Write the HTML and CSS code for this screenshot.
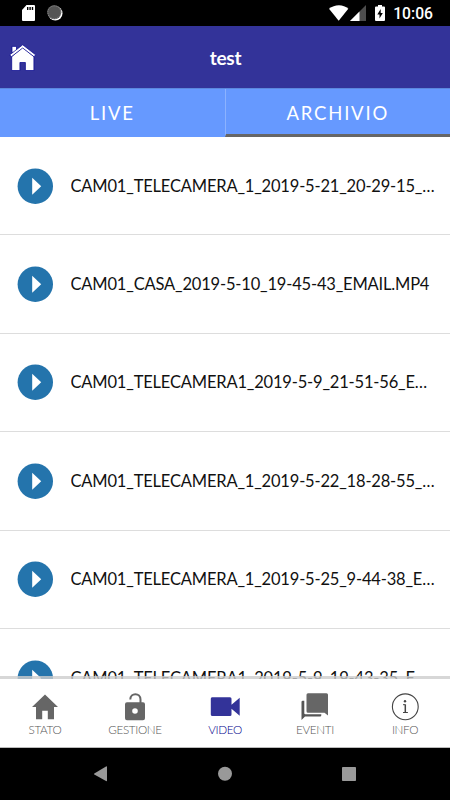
FILE: index.html
```html
<!DOCTYPE html>
<html lang="it">
<head>
  <meta charset="utf-8">
  <meta name="viewport" content="width=device-width, initial-scale=1">
  <title>test</title>
  <link rel="stylesheet" href="styles.css">
</head>
<body>
  <div class="status-bar">
    <svg class="sd" width="13" height="16" viewBox="0 0 13 16"><path fill="#fff" d="M4.5 0H12a1 1 0 0 1 1 1v14a1 1 0 0 1-1 1H1a1 1 0 0 1-1-1V5z"/><path stroke="#000" stroke-width="1.4" d="M5.7 2v3M8.1 2v3M10.5 2v3"/></svg>
    <svg class="sync" width="16" height="16" viewBox="0 0 16 16"><circle cx="8.3" cy="8.3" r="7.2" fill="#fff"/><circle cx="7.3" cy="7.3" r="7" fill="#555"/><circle cx="7.300" cy="7.300" r="6.500" fill="none" stroke="#999" stroke-width="1" stroke-dasharray="1 1"/></svg>
    <svg class="wifi" width="20" height="16" viewBox="0 0 20 16"><path fill="#fff" d="M0 3.8C5.500-.9 14.500-.9 19.300 3.800L9.700 15.700z"/></svg>
    <svg class="signal" width="16" height="16" viewBox="0 0 16 16"><path fill="#4d4d4d" d="M16 0v16H0z"/><path fill="#fff" d="M9.500 6.500V16H0z"/></svg>
    <svg class="battery" width="10" height="16" viewBox="0 0 10 16"><path fill="#fff" d="M3 0h4v1.500h2a1 1 0 0 1 1 1V15a1 1 0 0 1-1 1H1a1 1 0 0 1-1-1V2.500a1 1 0 0 1 1-1h2z"/><path d="M5.700 4 2.300 9.500h2.200V13.500L7.800 8H5.700z"/></svg>
    <span class="clock">10:06</span>
  </div>

  <div class="header">
    <svg class="home" width="26" height="28" viewBox="0 0 26 28"><g fill="#fff" stroke="#00008b" stroke-width=".7"><path d="M2 2.400h4.500v6H2z"/><path d="M12.700 3.500 1.700 12.500V26.500h8.200v-8h5.500v8h8.500v-14z"/><path d="M12.700.8-.2 10.800l1.500 2L12.700 4l11.400 8.800 1.500-2z"/></g></svg>
    <h1>test</h1>
  </div>

  <div class="tabs">
    <div class="tab">LIVE</div>
    <div class="tab active">ARCHIVIO</div>
  </div>

  <div class="list" id="videoList"></div>

  <div class="bottom-bar">
    <div class="item">
      <svg width="28" height="28" viewBox="0 0 28 28"><path fill="#666" d="M14 1.500 1 14h4v12.200h6.200v-8.500h5.600v8.500H23V14h4z"/></svg>
      <span>STATO</span>
    </div>
    <div class="item">
      <svg width="28" height="28" viewBox="0 0 28 28"><path fill="none" stroke="#666" stroke-width="2" d="M9.300 6.500C9.300-.6 19.500-.6 19.500 6.500v3.500"/><path fill="#666" fill-rule="evenodd" d="M6 9.200h16a2 2 0 0 1 2 2v14a2 2 0 0 1-2 2H6a2 2 0 0 1-2-2v-14a2 2 0 0 1 2-2zm8 6a2.800 2.800 0 1 0 0 5.600 2.800 2.800 0 0 0 0-5.600z"/></svg>
      <span>GESTIONE</span>
    </div>
    <div class="item selected">
      <svg width="30" height="28" viewBox="0 0 30 28"><path fill="#339" d="M2 4.300h18a1.500 1.500 0 0 1 1.500 1.500v6l8.200-7v18l-8.200-7v5.600a1.500 1.500 0 0 1-1.500 1.500H2A1.500 1.500 0 0 1 .8 21.400V5.800A1.500 1.500 0 0 1 2 4.300z"/></svg>
      <span>VIDEO</span>
    </div>
    <div class="item">
      <svg width="28" height="28" viewBox="0 0 28 28"><path fill="#666" d="M7 .3h18.500a1.500 1.500 0 0 1 1.500 1.500v20.700l-3.500-2.800H7a1.500 1.500 0 0 1-1.500-1.500V1.800A1.500 1.500 0 0 1 7 .3z"/><path fill="#555" d="M.5 9a1.200 1.200 0 0 1 1.200-1.200h1.600v12.400q0 1 1 1h16v1a1.200 1.200 0 0 1-1.200 1.200H4L.5 27z"/></svg>
      <span>EVENTI</span>
    </div>
    <div class="item">
      <svg width="28" height="28" viewBox="0 0 28 28"><circle cx="14.300" cy="13.800" r="12.900" fill="none" stroke="#444" stroke-width="1.100"/><circle cx="14" cy="8.300" r="1.200" fill="#444"/><path fill="none" stroke="#444" d="M12 11.700h2M12 19.500h4.900"/><path stroke="#444" stroke-width="1.500" d="M14.300 11.300v8.400"/></svg>
      <span>INFO</span>
    </div>
  </div>

  <div class="nav-bar">
    <svg width="14" height="16" viewBox="0 0 14 16"><path fill="#999" d="M12 .5Q13 0 13 1v13.500q0 1-1 .5L.3 8.500Q-.5 8 .3 7.500z"/></svg>
    <svg width="14" height="16" viewBox="0 0 14 16"><circle cx="7" cy="7.700" r="7" fill="#999"/></svg>
    <svg width="14" height="16" viewBox="0 0 14 16"><rect y="1" width="14" height="14" rx=".8" fill="#999"/></svg>
  </div>

  <script>
    const videos = [
      "CAM01_TELECAMERA_1_2019-5-21_20-29-15_EMAIL.MP4",
      "CAM01_CASA_2019-5-10_19-45-43_EMAIL.MP4",
      "CAM01_TELECAMERA1_2019-5-9_21-51-56_EMAIL.MP4",
      "CAM01_TELECAMERA_1_2019-5-22_18-28-55_EMAIL.MP4",
      "CAM01_TELECAMERA_1_2019-5-25_9-44-38_EMAIL.MP4",
      "CAM01_TELECAMERA1_2019-5-9_19-43-35_EMAIL.MP4"
    ];
    const list = document.getElementById("videoList");
    videos.forEach(name => {
      const row = document.createElement("div");
      row.className = "row";
      row.innerHTML = `
        <svg class="play" width="36" height="36" viewBox="0 0 36 36">
          <circle cx="18.300" cy="18.200" r="17.700" fill="#2474ac"/>
          <path fill="#fff" d="M15.200 9.700v17l9-8.500z"/>
        </svg>
        <span class="name">${name}</span>
      `;
      list.appendChild(row);
    });
  </script>
</body>
</html>
```
FILE: styles.css
```css
* {
  box-sizing: border-box;
}

body {
  margin: 0;
  height: 800px;
  display: flex;
  flex-direction: column;
  overflow: hidden;
  background-color: white;
  font-family: Lato, sans-serif;
}

svg {
  display: block;
  flex-shrink: 0;
}

.status-bar {
  height: 26px;
  flex-shrink: 0;
  display: flex;
  align-items: center;
  padding: 0 17px 0 22px;
  background-color: black;
  color: white;
}

.sync {
  margin-left: 12px;
}

.wifi {
  margin-left: auto;
}

.signal {
  margin-left: 1px;
}

.battery {
  margin-left: 9px;
}

.clock {
  margin-left: 8px;
  padding-top: 2px;
  font-family: Roboto, sans-serif;
  font-size: 15.7px;
  font-weight: 500;
  line-height: 20px;
}

/* Title bar */
.header {
  height: 62px;
  flex-shrink: 0;
  display: grid;
  grid-template-columns: 36px 1fr 36px;
  align-items: center;
  background-color: #333399;
  color: white;
}

.home {
  margin-left: 10px;
  margin-top: 1px;
  overflow: visible;
}

.header h1 {
  margin: 0;
  padding-left: 1px;
  font-size: 19px;
  font-weight: bold;
  letter-spacing: -0.3px;
  text-align: center;
}

.tabs {
  height: 49px;
  flex-shrink: 0;
  display: flex;
  border-top: 1px solid #5c88dd;
}

.tab {
  flex: 1;
  padding-top: 1px;
  background-color: #6699ff;
  color: white;
  font-size: 18.5px;
  letter-spacing: 1.8px;
  line-height: 46px;
  text-align: center;
}

.tab.active {
  border-left: 1px solid #8cb2ff;
  border-bottom: 3px solid #666666;
}

.list {
  height: 542px;
  flex-shrink: 0;
  overflow: hidden;
}

.row {
  height: 98.4px;
  display: flex;
  align-items: center;
  padding: 0 14px 0 17px;
  border-bottom: 1px solid #dddddd;
}

.name {
  flex: 1;
  margin-left: 17.5px;
  overflow: hidden;
  white-space: nowrap;
  text-overflow: ellipsis;
  color: #111111;
  font-size: 16.5px;
  letter-spacing: -0.18px;
  line-height: 20px;
}

.bottom-bar {
  position: relative;
  height: 72px;
  margin-top: -3px;
  flex-shrink: 0;
  display: flex;
  border-top: 3px solid rgba(205, 205, 205, 0.8);
  border-bottom: 1px solid #bbbbbb;
}

.item {
  flex: 1;
  display: flex;
  flex-direction: column;
  align-items: center;
  padding-top: 14px;
  color: #555555;
  font-size: 11.7px;
  font-weight: 300;
  letter-spacing: -0.35px;
  line-height: 16px;
}

.item.selected {
  color: #00008b;
}

.nav-bar {
  flex: 1;
  display: flex;
  justify-content: center;
  align-items: center;
  gap: 110px;
  background-color: black;
}
```
